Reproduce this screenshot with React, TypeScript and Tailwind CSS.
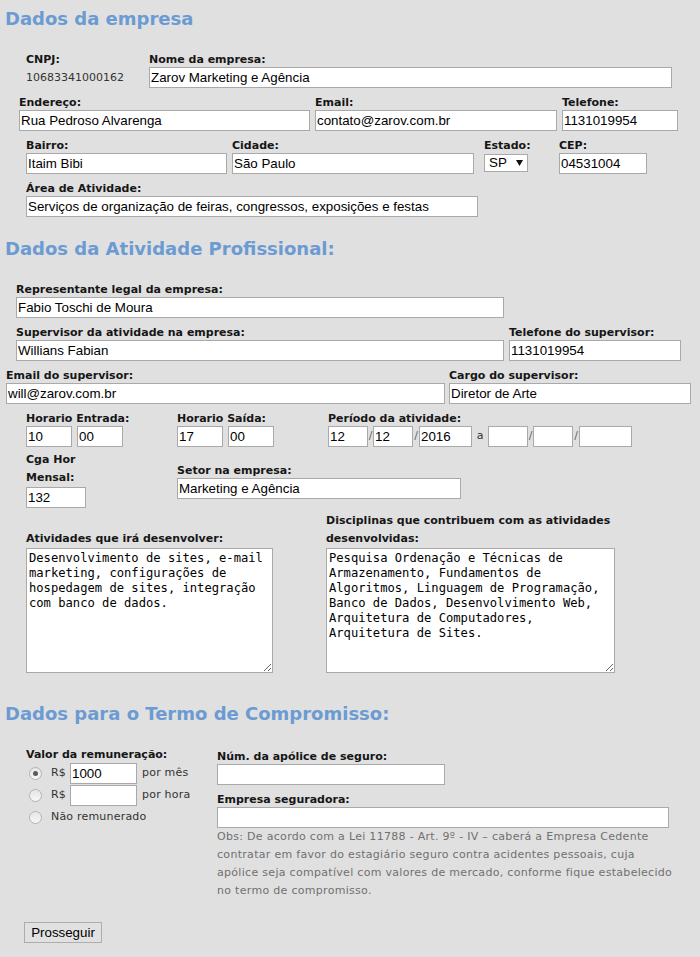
import React from "react";

const LBL = "block whitespace-nowrap font-['DejaVu_Sans',sans-serif] text-[11px] font-bold leading-[15px] text-[#161616]";
const INP = "block h-[21px] border border-[#a9a9a9] bg-white px-[1px] font-['Liberation_Sans',Arial,sans-serif] text-[13.33px] text-black outline-none";
const H = "pl-[5px] font-['DejaVu_Sans',sans-serif] text-[18px] font-bold leading-[22px] text-[#6b9bd2]";

function Field({ label, value = "", w, className = "" }: { label: string; value?: string; w: string; className?: string }) {
  return (
    <div className={`flex flex-col ${w} ${className}`}>
      <span className={LBL}>{label}</span>
      <input readOnly value={value} className={`${INP} w-full`} />
    </div>
  );
}

function Radio({ checked }: { checked?: boolean }) {
  return (
    <span className="ml-[3px] flex h-[13px] w-[13px] shrink-0 items-center justify-center rounded-full border border-[#b3b3b3] bg-gradient-to-b from-[#e6e6e6] to-[#f7f7f7]">
      {checked && <span className="h-[5px] w-[5px] rounded-full bg-[#5a5a5a]" />}
    </span>
  );
}

export default function App() {
  const txt = "font-['DejaVu_Sans',sans-serif] text-[11px] text-[#333]";
  return (
    <div className="min-h-screen w-[700px] bg-[#e0e0e0] font-['DejaVu_Sans',sans-serif] text-[11px] pb-[14px]">
      <h1 className={`${H} pt-[8px]`}>Dados da empresa</h1>

      {/* row 1 */}
      <div className="mt-[22px] flex pl-[26px]">
        <div className="flex w-[123px] flex-col">
          <span className={LBL}>CNPJ:</span>
          <span className="mt-[2px] block font-['DejaVu_Sans',sans-serif] text-[11px] leading-[18px] text-[#333]">10683341000162</span>
        </div>
        <Field label="Nome da empresa:" value="Zarov Marketing e Agência" w="w-[523px]" />
      </div>

      {/* row 2 */}
      <div className="mt-[7px] flex pl-[19px]">
        <Field label="Endereço:" value="Rua Pedroso Alvarenga" w="w-[291px]" />
        <Field label="Email:" value="contato@zarov.com.br" w="w-[242px]" className="ml-[5px]" />
        <Field label="Telefone:" value="1131019954" w="w-[116px]" className="ml-[5px]" />
      </div>

      {/* row 3 */}
      <div className="mt-[7px] flex items-start pl-[26px]">
        <Field label="Bairro:" value="Itaim Bibi" w="w-[201px]" />
        <Field label="Cidade:" value="São Paulo" w="w-[242px]" className="ml-[5px]" />
        <div className="ml-[10px] flex w-[44px] flex-col">
          <span className={LBL}>Estado:</span>
          <div className="mt-[1px] flex h-[18px] w-[44px] items-center border border-[#a9a9a9] bg-white pl-[4px] font-['Liberation_Sans',Arial,sans-serif] text-[13.33px] text-black">
            <span>SP</span>
            <svg width="7" height="6" viewBox="0 0 7 6" className="ml-[9px]">
              <path d="M0 0 H7 L3.5 6 Z" fill="#111" />
            </svg>
          </div>
        </div>
        <Field label="CEP:" value="04531004" w="w-[88px]" className="ml-[31px]" />
      </div>

      {/* row 4 */}
      <div className="mt-[7px] flex pl-[26px]">
        <Field label="Área de Atividade:" value="Serviços de organização de feiras, congressos, exposições e festas" w="w-[452px]" />
      </div>

      <h2 className={`${H} mt-[21px]`}>Dados da Atividade Profissional:</h2>

      <div className="mt-[22px] flex pl-[16px]">
        <Field label="Representante legal da empresa:" value="Fabio Toschi de Moura" w="w-[488px]" />
      </div>

      <div className="mt-[7px] flex pl-[16px]">
        <Field label="Supervisor da atividade na empresa:" value="Willians Fabian" w="w-[488px]" />
        <Field label="Telefone do supervisor:" value="1131019954" w="w-[172px]" className="ml-[5px]" />
      </div>

      <div className="mt-[7px] flex pl-[6px]">
        <Field label="Email do supervisor:" value="will@zarov.com.br" w="w-[439px]" />
        <Field label="Cargo do supervisor:" value="Diretor de Arte" w="w-[242px]" className="ml-[4px]" />
      </div>

      {/* horarios */}
      <div className="mt-[7px] flex pl-[26px]">
        <div className="flex w-[151px] flex-col">
          <span className={LBL}>Horario Entrada:</span>
          <div className="flex">
            <input readOnly value="10" className={`${INP} w-[46px]`} />
            <input readOnly value="00" className={`${INP} ml-[5px] w-[46px]`} />
          </div>
        </div>
        <div className="flex w-[151px] flex-col">
          <span className={LBL}>Horario Saída:</span>
          <div className="flex">
            <input readOnly value="17" className={`${INP} w-[46px]`} />
            <input readOnly value="00" className={`${INP} ml-[5px] w-[46px]`} />
          </div>
        </div>
        <div className="flex flex-col">
          <span className={LBL}>Período da atividade:</span>
          <div className="flex items-center">
            <input readOnly value="12" className={`${INP} w-[40px]`} />
            <span className={`${txt} w-[5px] text-center text-[#666]`}>/</span>
            <input readOnly value="12" className={`${INP} w-[40px]`} />
            <span className={`${txt} w-[6px] text-center text-[#666]`}>/</span>
            <input readOnly value="2016" className={`${INP} w-[53px]`} />
            <span className={`${txt} w-[16px] text-center`}>a</span>
            <input readOnly value="" className={`${INP} w-[40px]`} />
            <span className={`${txt} w-[5px] text-center text-[#666]`}>/</span>
            <input readOnly value="" className={`${INP} w-[40px]`} />
            <span className={`${txt} w-[6px] text-center text-[#666]`}>/</span>
            <input readOnly value="" className={`${INP} w-[53px]`} />
          </div>
        </div>
      </div>

      {/* carga / setor */}
      <div className="mt-[4px] flex items-start pl-[26px]">
        <div className="flex w-[151px] flex-col">
          <span className={`${LBL} leading-[18px]`}>
            Cga Hor
            <br />
            Mensal:
          </span>
          <input readOnly value="132" className={`${INP} w-[60px]`} />
        </div>
        <div className="mt-[12px]">
          <Field label="Setor na empresa:" value="Marketing e Agência" w="w-[284px]" />
        </div>
      </div>

      {/* textareas */}
      <div className="mt-[4px] flex items-end pl-[26px]">
        <div className="flex w-[300px] flex-col">
          <span className={`${LBL} leading-[18px]`}>Atividades que irá desenvolver:</span>
          <textarea
            readOnly
            defaultValue="Desenvolvimento de sites, e-mail marketing, configurações de hospedagem de sites, integração com banco de dados."
            className="block h-[125px] w-[247px] border border-[#a9a9a9] bg-white p-[2px] font-['DejaVu_Sans_Mono',monospace] text-[12.15px] leading-[15px] text-black outline-none"
          />
        </div>
        <div className="flex flex-col">
          <span className={`${LBL} leading-[18px]`}>
            Disciplinas que contribuem com as atividades
            <br />
            desenvolvidas:
          </span>
          <textarea
            readOnly
            defaultValue="Pesquisa Ordenação e Técnicas de Armazenamento, Fundamentos de Algoritmos, Linguagem de Programação, Banco de Dados, Desenvolvimento Web, Arquitetura de Computadores, Arquitetura de Sites."
            className="block h-[125px] w-[289px] border border-[#a9a9a9] bg-white p-[2px] font-['DejaVu_Sans_Mono',monospace] text-[12.15px] leading-[15px] text-black outline-none"
          />
        </div>
      </div>

      <h2 className={`${H} mt-[30px]`}>Dados para o Termo de Compromisso:</h2>

      <div className="mt-[22px] flex items-start pl-[26px]">
        <div className="flex w-[191px] flex-col">
          <span className={LBL}>Valor da remuneração:</span>
          <div className="flex h-[22px] items-center">
            <Radio checked />
            <span className={`${txt} ml-[9px] tracking-[0.2px]`}>R$</span>
            <input readOnly value="1000" className={`${INP} ml-[4px] w-[67px]`} />
            <span className={`${txt} ml-[5px] tracking-[0.2px]`}>por mês</span>
          </div>
          <div className="flex h-[22px] items-center">
            <Radio />
            <span className={`${txt} ml-[9px] tracking-[0.2px]`}>R$</span>
            <input readOnly value="" className={`${INP} ml-[4px] w-[67px]`} />
            <span className={`${txt} ml-[5px] tracking-[0.2px]`}>por hora</span>
          </div>
          <div className="flex h-[22px] items-center">
            <Radio />
            <span className={`${txt} ml-[9px] tracking-[0.2px]`}>Não remunerado</span>
          </div>
        </div>
        <div className="mt-[2px] flex flex-col">
          <Field label="Núm. da apólice de seguro:" value="" w="w-[228px]" />
          <Field label="Empresa seguradora:" value="" w="w-[452px]" className="mt-[7px]" />
          <p className="font-['DejaVu_Sans',sans-serif] text-[11px] leading-[18px] tracking-[0.3px] text-[#707070]">
            <span className="block whitespace-nowrap">Obs: De acordo com a Lei 11788 - Art. 9º - IV – caberá a Empresa Cedente</span>
            <span className="block whitespace-nowrap">contratar em favor do estagiário seguro contra acidentes pessoais, cuja</span>
            <span className="block whitespace-nowrap">apólice seja compatível com valores de mercado, conforme fique estabelecido</span>
            <span className="block whitespace-nowrap">no termo de compromisso.</span>
          </p>
        </div>
      </div>

      <div className="mt-[22px] pl-[24px]">
        <button className="h-[21px] w-[78px] border border-[#adadad] bg-[#e1e1e1] font-['Liberation_Sans',Arial,sans-serif] text-[13.33px] text-black">
          Prosseguir
        </button>
      </div>
    </div>
  );
}
